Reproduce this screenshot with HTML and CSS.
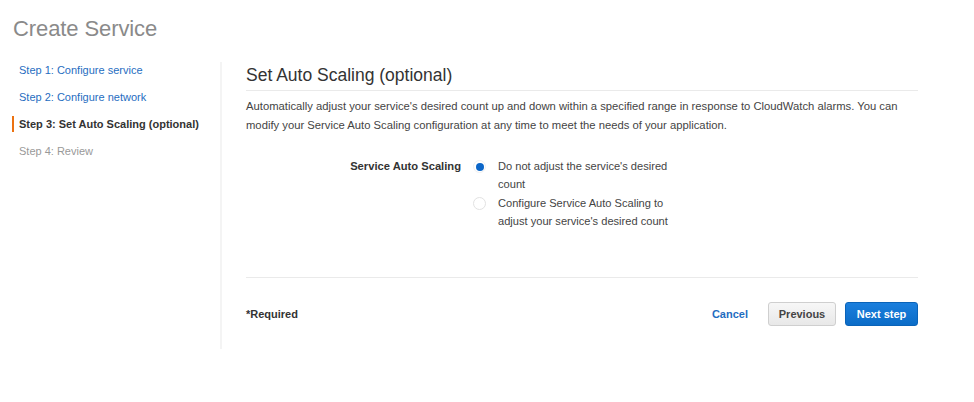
FILE: index.html
```html
<!DOCTYPE html>
<html>
<head>
<meta charset="utf-8">
<link rel="stylesheet" href="styles.css">
</head>
<body>
<h1 class="page-title">Create Service</h1>
<div class="layout">
  <nav class="steps">
    <a class="step link">Step 1: Configure service</a>
    <a class="step link">Step 2: Configure network</a>
    <a class="step current">Step 3: Set Auto Scaling (optional)</a>
    <span class="step disabled">Step 4: Review</span>
  </nav>
  <main class="content">
    <h2 class="section-title">Set Auto Scaling (optional)</h2>
    <p class="desc">Automatically adjust your service's desired count up and down within a specified range in response to CloudWatch alarms. You can modify your Service Auto Scaling configuration at any time to meet the needs of your application.</p>
    <div class="form-row">
      <div class="form-label">Service Auto Scaling</div>
      <div class="options">
        <label class="option"><span class="radio checked"></span><span class="opt-text">Do not adjust the service's desired<br>count</span></label>
        <label class="option"><span class="radio"></span><span class="opt-text">Configure Service Auto Scaling to<br>adjust your service's desired count</span></label>
      </div>
    </div>
    <div class="footer">
      <span class="required">*Required</span>
      <div class="actions">
        <a class="cancel">Cancel</a>
        <button class="btn btn-secondary">Previous</button>
        <button class="btn btn-primary">Next step</button>
      </div>
    </div>
  </main>
</div>
</body>
</html>
```

FILE: styles.css
```css
* { box-sizing: border-box; }
body {
  margin: 0;
  background: #fff;
  font-family: "Liberation Sans", Arial, sans-serif;
  color: #444;
  width: 974px;
  height: 402px;
  overflow: hidden;
}
.page-title {
  margin: 0;
  padding: 16px 0 0 13px;
  height: 52px;
  font-size: 22px;
  font-weight: normal;
  color: #8a8a8a;
  letter-spacing: -0.1px;
}
.layout {
  display: flex;
  padding-top: 10px;
}
.steps {
  width: 222px;
  display: flex;
  flex-direction: column;
  padding-top: 1px;
  border-right: 2px solid #f4f4f4;
  height: 287px;
}
.step {
  display: block;
  font-size: 11px;
  line-height: 14px;
  padding: 0 0 13px 19px;
  position: relative;
}
.step.link { color: #1f6dc1; }
.step.current { color: #333; font-weight: bold; }
.step.current::before {
  content: "";
  position: absolute;
  left: 12px;
  top: -1px;
  width: 2px;
  height: 16px;
  background: #ec7211;
}
.step.disabled { color: #999; }
.content {
  flex: 1;
  padding: 0 56px 0 24px;
}
.section-title {
  margin: 2px 0 0;
  font-size: 17.5px;
  font-weight: normal;
  color: #333;
  line-height: 22px;
  padding-bottom: 4px;
  border-bottom: 1px solid #eaeaea;
}
.desc {
  margin: 6px 0 0;
  font-size: 11.25px;
  line-height: 19px;
  color: #444;
}
.form-row {
  display: flex;
  margin-top: 23px;
}
.form-label {
  width: 227px;
  text-align: right;
  font-weight: bold;
  font-size: 11.2px;
  line-height: 17px;
  color: #333;
  padding-right: 12px;
}
.options { display: flex; flex-direction: column; gap: 2px; }
.option {
  display: flex;
  align-items: flex-start;
  font-size: 11.1px;
  line-height: 17.5px;
  color: #444;
}
.radio {
  width: 13px;
  height: 13px;
  border-radius: 50%;
  border: 1px solid #e2e2e2;
  background: #fff;
  margin: 2px 12px 0 0;
  flex: none;
  position: relative;
}
.radio.checked { border-color: #f0f0f0; }
.radio.checked::after {
  content: "";
  position: absolute;
  left: 1.5px;
  top: 1.5px;
  width: 8px;
  height: 8px;
  border-radius: 50%;
  background: #0b66c8;
}
.footer {
  margin-top: 47px;
  border-top: 1px solid #eaeaea;
  padding-top: 24px;
  display: flex;
  justify-content: space-between;
  align-items: center;
}
.required { font-weight: bold; font-size: 11px; color: #333; }
.actions { display: flex; align-items: center; }
.cancel {
  color: #1f6dc1;
  font-weight: bold;
  font-size: 11px;
  margin-right: 20px;
}
.btn {
  font-family: "Liberation Sans", Arial, sans-serif;
  font-weight: bold;
  font-size: 11px;
  height: 24px;
  border-radius: 3px;
  padding: 0;
}
.btn-secondary {
  width: 68px;
  color: #444;
  background: linear-gradient(#f7f7f7, #e8e8e8);
  border: 1px solid #cfcfcf;
  margin-right: 9px;
}
.btn-primary {
  width: 73px;
  color: #fff;
  background: linear-gradient(#1b7fdd, #0b6cc7);
  border: 1px solid #0a63b8;
}
```
